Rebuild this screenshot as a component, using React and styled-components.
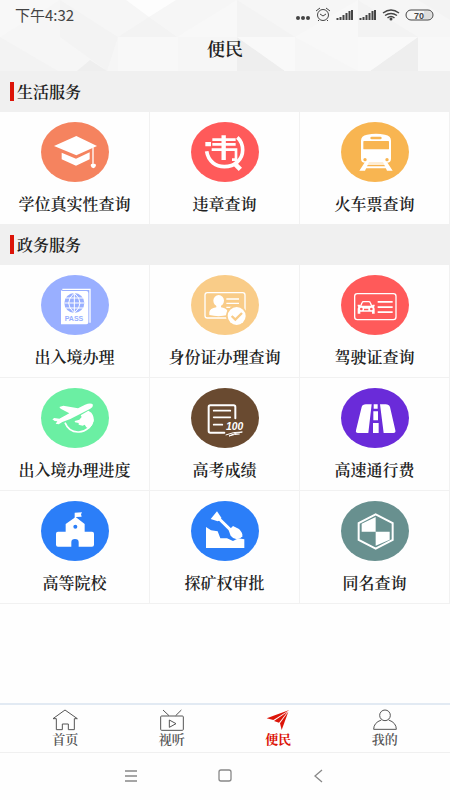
import React from "react";
import styled, { createGlobalStyle } from "styled-components";

const GlobalStyle = createGlobalStyle`
  * {
    box-sizing: border-box;
  }
  body {
    margin: 0;
    background: #fefefe;
    color: #222;
    font-family: "Noto Serif CJK SC", "Noto Sans CJK SC", serif;
  }
  h1, h2, p {
    margin: 0;
  }
`;

const Page = styled.div`
  display: flex;
  flex-direction: column;
  min-height: 100vh;
`;

const Header = styled.header`
  position: relative;
  background: #f6f6f6;
`;

const Facets = styled.svg`
  position: absolute;
  inset: 0;
  width: 100%;
  height: 100%;
`;

const StatusBar = styled.div`
  position: relative;
  display: flex;
  justify-content: space-between;
  align-items: center;
  height: 28px;
  padding: 0 14px 0 15px;
  color: #444;
  font-family: "Noto Sans CJK SC", sans-serif;
  font-size: 15px;
`;

const StatusIcons = styled.svg`
  display: block;
  width: 142px;
  height: 20px;
  margin-top: 2px;
`;

const Title = styled.h1`
  position: relative;
  height: 43px;
  line-height: 40px;
  text-align: center;
  font-size: 18px;
  font-weight: 600;
`;

const Main = styled.main`
  flex: 1;
`;

const SectionTitle = styled.h2`
  display: flex;
  align-items: center;
  gap: 3px;
  height: 41px;
  padding-left: 10px;
  background: #f0f0f0;
  font-size: 16px;
  font-weight: 600;
  &::before {
    content: "";
    width: 4px;
    height: 19px;
    background: #dc1408;
  }
`;

const Grid = styled.div`
  display: grid;
  grid-template-columns: repeat(3, 1fr);
  gap: 1px;
  background: #f1f1f1;
  border-right: 1px solid #f1f1f1;
  border-bottom: ${(props) => (props.$closed ? "1px solid #f1f1f1" : "0")};
`;

const Service = styled.button`
  display: flex;
  flex-direction: column;
  align-items: center;
  gap: 10px;
  height: 112px;
  padding: 10px 0 8px;
  border: 0;
  background: #fefefe;
  color: #222;
  font-family: inherit;
  font-size: 16px;
  font-weight: 600;
  line-height: 24px;
  white-space: nowrap;
`;

const Badge = styled.svg`
  display: block;
  flex: none;
  width: 68px;
  height: 60px;
  border-radius: 50%;
  background: ${(props) => props.$color};
  color: ${(props) => props.$color};
  fill: #fff;
`;

const Tabs = styled.nav`
  display: flex;
  height: 50px;
  padding: 4px 12px 0;
  border-top: 2px solid #e2eaf3;
  border-bottom: 1px solid #f0f0f0;
`;

const Tab = styled.a`
  flex: 1;
  display: flex;
  flex-direction: column;
  align-items: center;
  color: ${(props) => (props.$active ? "#dc1408" : "#555")};
  font-size: 13px;
  font-weight: ${(props) => (props.$active ? 700 : 600)};
  line-height: 15px;
  text-decoration: none;
`;

const TabIcon = styled.svg`
  width: 26px;
  height: 22px;
  fill: none;
  stroke: currentColor;
  stroke-width: 3;
`;

const SystemBar = styled.div`
  display: flex;
  justify-content: center;
  gap: 70px;
  height: 47px;
  padding-top: 11px;
`;

const SystemButton = styled.button`
  width: 24px;
  height: 24px;
  padding: 0;
  border: 0;
  background: none;
  svg {
    display: block;
    fill: none;
    stroke: #888;
    stroke-width: 1.3;
  }
`;

const Degree = () => (
  <>
    <path d="M106 42 39 72l67 28 62-28z" />
    <path d="M62 92v20l43 19 41-19V91l-41 19z" />
    <path d="M154 76h4v50h-4z" />
    <path d="M149 130q0-6 8-4 8-2 8 4-1 7-8 9-7-2-8-9z" />
  </>
);

const Violation = () => (
  <>
    <path d="M43 60h17v13H43z" />
    <g fill="none" stroke="#fff">
      <path d="M47 88C52 120 76 134 100 134 132 134 155 112 155 84 155 68 150 56 139 46" strokeWidth="11" />
      <path d="M128 122l20 20" strokeWidth="14" />
      <path d="M64 53h70M64 67h70M62 83h73v30h-12" strokeWidth="8" />
      <path d="M98 40v74" strokeWidth="13" />
    </g>
  </>
);

const Train = () => (
  <>
    <path d="M78 38q27-5 54 0 18 3 18 18v54q0 12-12 12H72q-12 0-12-12V56q0-15 18-18z" />
    <g fill="currentColor">
      <rect x="67" y="57" width="77" height="25" rx="2" />
      <rect x="88" y="44" width="34" height="8" rx="4" />
      <circle cx="72" cy="113" r="5" />
      <circle cx="138" cy="113" r="5" />
    </g>
    <path d="M72 120h12l-12 26H55zM138 120h-12l12 26h17z" />
    <path d="M78 124h54v4H78zM72 133h66v6H72z" />
  </>
);

const Passport = () => (
  <>
    <path d="M64 43h83v100" fill="none" stroke="#fff" strokeWidth="4" />
    <path d="M60 44q0 4 6 4h70q6 0 6 6v88q0 6-6 6H60z" />
    <circle cx="100" cy="84" r="30" fill="currentColor" />
    <path
      d="M100 54v60M70 84h60M74 69h52M74 99h52M100 54q-34 30 0 60M100 54q34 30 0 60"
      fill="none"
      stroke="#fff"
      strokeWidth="3"
    />
    <text x="99" y="137" textAnchor="middle" fill="currentColor" fontFamily="Liberation Sans" fontWeight="700" fontSize="21">
      PASS
    </text>
  </>
);

const IdCard = () => (
  <>
    <rect x="42" y="53" width="120" height="76" rx="7" fill="none" stroke="#fff" strokeWidth="4" />
    <ellipse cx="83" cy="77" rx="16" ry="17" />
    <path d="M76 88h14v9q20 4 20 14v9q-27 7-55 0v-9q1-10 21-14z" />
    <path d="M106 70h38v4h-38zM106 83h38v4h-38zM106 95h16v4h-16z" />
    <circle cx="137" cy="123" r="32" fill="currentColor" />
    <circle cx="137" cy="123" r="27" />
    <path d="M122 123l11 11 20-20" fill="none" stroke="currentColor" strokeWidth="7" />
  </>
);

const Licence = () => (
  <>
    <rect x="41" y="56" width="124" height="78" rx="8" fill="none" stroke="#fff" strokeWidth="4" />
    <path d="M59 93l4-10q1-3 5-3h15q4 0 5 3l4 10" fill="none" stroke="#fff" strokeWidth="4" />
    <path d="M50 89h6l3 3h33l3-3h6v4l-2 3q2 3 2 7v13h-8v-6H58v6h-8v-13q0-4 2-7l-2-3z" />
    <circle cx="61" cy="102" r="4" fill="currentColor" />
    <circle cx="91" cy="102" r="4" fill="currentColor" />
    <path d="M69 101h13v5H69z" fill="currentColor" />
    <path d="M110 78h45v5h-45zM110 94h45v5h-45zM110 109h45v5h-45z" />
  </>
);

const Departure = () => (
  <>
    <path d="M72 104c8 20 24 29 42 28 20-1 38-15 42-38" fill="none" stroke="#fff" strokeWidth="5" />
    <path d="M124 79l18-11 9 6q9 12 7 26-2 12-14 22l-8-4-5-8-6 3-12-3v-5l-11-2-1-4 14-4 7-8-3-5z" />
    <path d="M156 50q-6-7-24 0l-21 11-44-8-12 4 4 5 26 14-30 16-15-2-6 4 7 5 8 1-5 7 9 2 11-7 24-9 60-31q9-6 8-12z" />
  </>
);

const Exam = () => (
  <>
    <g fill="none" stroke="#fff" strokeWidth="6" strokeLinecap="round" strokeLinejoin="round">
      <path d="M100 134H58q-5 0-5-5V57q0-5 5-5h70q5 0 5 5v34" />
      <path d="M68 68h50M68 88h50M68 110h26" strokeWidth="5" />
    </g>
    <text x="131" y="126" textAnchor="middle" fontFamily="Liberation Sans" fontStyle="italic" fontWeight="700" fontSize="31">
      100
    </text>
    <path d="M104 141q24-10 50-9-24 3-40 12 18-6 32-6" fill="none" stroke="#fff" strokeWidth="3" />
  </>
);

const Road = () => (
  <>
    <path d="M75 49h17l-10 86H51q-8 0-6-8l17-70q2-8 13-8z" />
    <path d="M117 49h17q10 0 13 8l16 70q2 8-6 8h-29z" />
    <path d="M98 49h12v13H98zM97 70h14v27H97zM96 105h17v30H96z" />
  </>
);

const School = () => (
  <>
    <path d="M101 35l22-1-3 6 2 7-17 1v8h-4z" />
    <path d="M104 48l27 21v23h22q6 0 6 6v33q0 6-6 6h-40v-13q0-10-11-10T91 124v13H51q-6 0-6-6V98q0-6 6-6h23V69z" />
    <circle cx="103" cy="77" r="6" fill="currentColor" />
  </>
);

const Mining = () => (
  <>
    <path d="M45 141V78l15 10 20 3 8 21h20l18 8 16-8 18 3v26z" />
    <path d="M59 54l19-23 13 19-2 8-9 3z" />
    <path d="M82 51l38 37" stroke="#fff" strokeWidth="9" />
    <path d="M113 88l13-13 18 9q12 12 10 22-6 10-19 8-10-2-16-10z" />
  </>
);

const SameName = () => (
  <>
    <path d="M104 40l51 26v51l-51 26-51-26V66z" fill="none" stroke="#fff" strokeWidth="6" />
    <path d="M62 68l42-20v44H62zM104 92h42v24l-42 18z" />
  </>
);

const sections = [
  {
    title: "生活服务",
    items: [
      { name: "学位真实性查询", color: "#f5835f", Icon: Degree },
      { name: "违章查询", color: "#ff5a5a", Icon: Violation },
      { name: "火车票查询", color: "#f8b551", Icon: Train },
    ],
  },
  {
    title: "政务服务",
    items: [
      { name: "出入境办理", color: "#99afff", Icon: Passport },
      { name: "身份证办理查询", color: "#f9cc88", Icon: IdCard },
      { name: "驾驶证查询", color: "#ff5a5a", Icon: Licence },
      { name: "出入境办理进度", color: "#6befa3", Icon: Departure },
      { name: "高考成绩", color: "#694a30", Icon: Exam },
      { name: "高速通行费", color: "#6a2bd9", Icon: Road },
      { name: "高等院校", color: "#2b7ef8", Icon: School },
      { name: "探矿权审批", color: "#2b7ef8", Icon: Mining },
      { name: "同名查询", color: "#68908f", Icon: SameName },
    ],
  },
];

const tabs = [
  {
    name: "首页",
    icon: <path d="M13 29H3L39 3l37 26H67v33H49V45H31v17H13V29" />,
  },
  {
    name: "视听",
    icon: (
      <>
        <rect x="5" y="21" width="68" height="43" rx="3" />
        <path d="M12 3l18 17M67 3L50 20M31 33v22l20-11z" />
      </>
    ),
  },
  {
    name: "便民",
    active: true,
    icon: (
      <g fill="currentColor" stroke="none">
        <path d="M73 3L5 28l20 5z" />
        <path d="M68 8L27 36l15 5z" />
        <path d="M70 8L45 43l5 20z" />
      </g>
    ),
  },
  {
    name: "我的",
    icon: (
      <>
        <circle cx="39" cy="19" r="16" />
        <path d="M28 33Q5 41 5 61h68Q73 41 50 33" />
      </>
    ),
  },
];

const HeaderPattern = () => (
  <Facets viewBox="0 0 450 71" preserveAspectRatio="none" aria-hidden="true">
    <path fill="#f8f8f8" d="M0 0h60L0 37zM177 37l60-37v37zM295 37l63-37v37zM118 37h60v34h-60zM295 37h63v34zM418 37h32v34h-32z" />
    <path fill="#f3f3f3" d="M60 0l58 37H60zM118 37l31-20 28 20zM237 0l58 37h-58zM358 0l60 37h-60zM0 37l58 34H0zM60 37h58l-11 34zM418 0h32v20z" />
    <path fill="#eeeeee" d="M77 71l13-11 17 11zM237 37l48 34h-48zM418 37v34h-48z" />
    <path fill="#fdfdfd" d="M126 0l23 17 27-17z" />
    <path fill="#f9f9f9" d="M237 37h58v34h-10zM358 37h60l-48 34h-12z" />
  </Facets>
);

const StatusIndicators = () => (
  <StatusIcons viewBox="0 0 142 20" fill="none" stroke="#444" aria-hidden="true">
    <g fill="#444" stroke="none">
      <circle cx="4" cy="13" r="2" />
      <circle cx="9" cy="13" r="2" />
      <circle cx="14" cy="13" r="2" />
    </g>
    <circle cx="29" cy="10" r="5.5" />
    <path d="M22 6l4-3M36 6l-4-3M26 9l3 2 3-2M25 15l-1 1M33 15l1 1" />
    <path d="M43.5 15v-2M46.5 15v-3M49.5 15v-5M52.5 15V8M55.5 15V6M58 15V5" strokeWidth="2" />
    <path d="M66.5 15v-2M69.5 15v-3M72.5 15v-5M75.5 15V8M78.5 15V6M81 15V5" strokeWidth="2" />
    <path d="M89 8q8-6 16 0M91 10.500q6-4 12 0M93.500 13q3.500-3 7 0" strokeWidth="1.500" />
    <circle cx="97" cy="14" r="1.500" fill="#444" stroke="none" />
    <path d="M130 6h3q5 0 5 4t-5 4h-3z" fill="#ddd" stroke="none" />
    <rect x="112" y="5" width="27" height="10" rx="5" />
    <text x="125" y="14" textAnchor="middle" fill="#444" stroke="none" fontFamily="Liberation Sans" fontWeight="700" fontSize="9">
      70
    </text>
  </StatusIcons>
);

const App = () => (
  <>
    <GlobalStyle />
    <Page>
      <Header>
        <HeaderPattern />
        <StatusBar>
          <span>下午4:32</span>
          <StatusIndicators />
        </StatusBar>
        <Title>便民</Title>
      </Header>
      <Main>
        {sections.map(({ title, items }) => (
          <section key={title}>
            <SectionTitle>{title}</SectionTitle>
            <Grid $closed={items.length > 3}>
              {items.map(({ name, color, Icon }) => (
                <Service key={name} type="button">
                  <Badge $color={color} viewBox="0 0 204 180" aria-hidden="true">
                    <Icon />
                  </Badge>
                  {name}
                </Service>
              ))}
            </Grid>
          </section>
        ))}
      </Main>
      <Tabs>
        {tabs.map(({ name, icon, active }) => (
          <Tab key={name} href="#" $active={active}>
            <TabIcon viewBox="0 0 78 66" aria-hidden="true">
              {icon}
            </TabIcon>
            {name}
          </Tab>
        ))}
      </Tabs>
      <SystemBar>
        <SystemButton type="button" aria-label="菜单">
          <svg viewBox="0 0 24 24">
            <path d="M6 7h12M6 12h12M6 17h12" />
          </svg>
        </SystemButton>
        <SystemButton type="button" aria-label="主屏幕">
          <svg viewBox="0 0 24 24">
            <rect x="6" y="6" width="12" height="11" rx="2" />
          </svg>
        </SystemButton>
        <SystemButton type="button" aria-label="返回">
          <svg viewBox="0 0 24 24">
            <path d="M15 6l-7 6 7 6" />
          </svg>
        </SystemButton>
      </SystemBar>
    </Page>
  </>
);

export default App;
